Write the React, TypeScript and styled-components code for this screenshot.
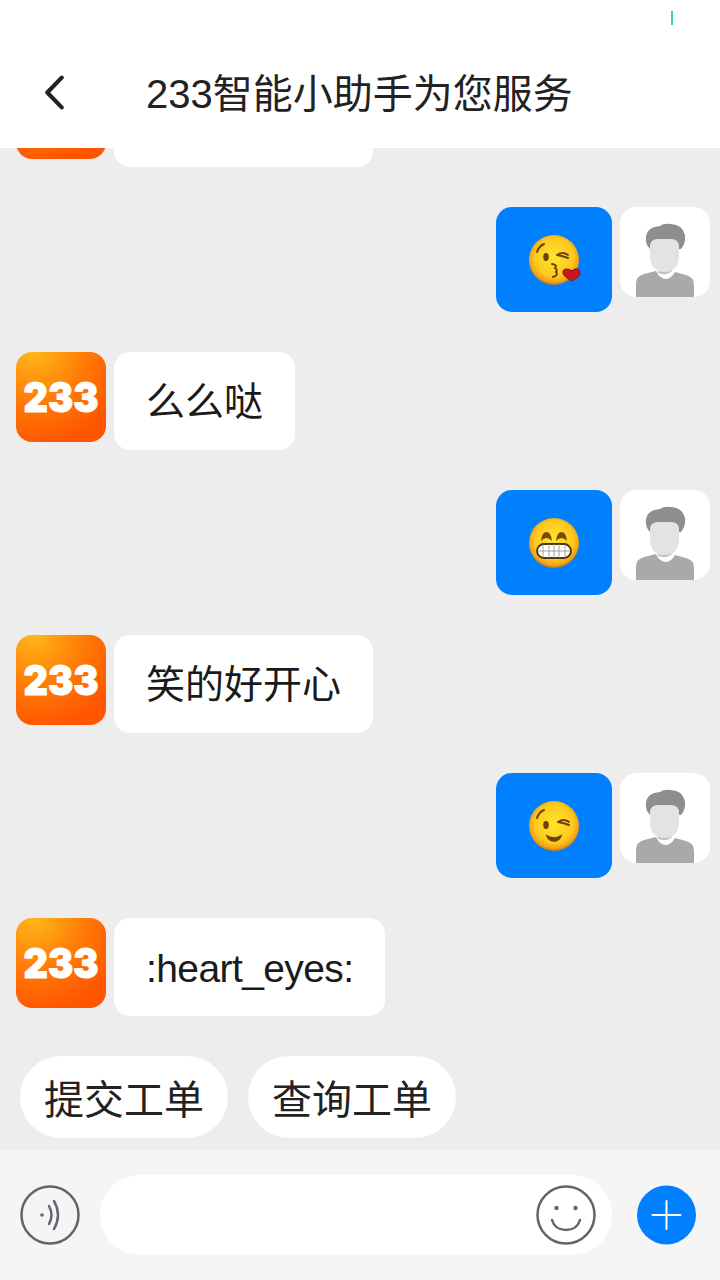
import * as React from 'react'
import styled, { createGlobalStyle } from 'styled-components'

const FONT = `'Liberation Sans', 'Noto Sans CJK SC', sans-serif`
const BLUE = '#0080ff'
const ICON_GREY = '#62646f'

type Face = 'kiss' | 'grin' | 'wink'

type Message =
  | { from: 'user'; face: Face }
  | { from: 'bot'; text: string; latin?: boolean; scrolledOut?: boolean }

const messages: Message[] = [
  // scrolled under the header, only its bottom edge shows
  { from: 'bot', text: '', scrolledOut: true },
  { from: 'user', face: 'kiss' },
  { from: 'bot', text: '么么哒' },
  { from: 'user', face: 'grin' },
  { from: 'bot', text: '笑的好开心' },
  { from: 'user', face: 'wink' },
  { from: 'bot', text: ':heart_eyes:', latin: true }
]

const quickActions = ['提交工单', '查询工单']

const BotLogo = ({ plain }: { plain?: boolean }) => (
  <LogoSvg viewBox="0 0 90 90">
    <defs>
      <radialGradient id="logoFill" cx="0.2" cy="0" r="1.05">
        <stop offset="0" stopColor="#ffb719" />
        <stop offset="0.55" stopColor="#ff7a06" />
        <stop offset="1" stopColor="#ff5500" />
      </radialGradient>
    </defs>
    <rect width="90" height="90" rx="16" fill="url(#logoFill)" />
    {!plain && (
      <LogoText
        x="45"
        y="60"
        textAnchor="middle"
        textLength="75"
        lengthAdjust="spacingAndGlyphs"
      >
        233
      </LogoText>
    )}
  </LogoSvg>
)

const UserAvatar = () => (
  <AvatarSvg viewBox="0 0 90 90">
    <rect width="90" height="90" rx="16" fill="#fff" />
    <path d="M16 90V77q0-8 8-10l12-3q4 8 10 8 5 0 9-7l11 3q8 2 8 10v12z" fill="#a9a9a9" />
    <path d="M38 58h14v6q-5 5-14 2z" fill="#c2c2c2" />
    <path d="M30 42Q25 37 26 30 27 20 40 19 44 16 50 17 62 17 65 28 66 36 61 42z" fill="#8e8e8e" />
    <path d="M30 40q0-8 8-8h13q8 0 8 8v8q0 17-14.500 17T30 48z" fill="#e3e3e3" />
  </AvatarSvg>
)

const FaceEmoji = ({ face }: { face: Face }) => (
  <EmojiSvg viewBox="0 0 52 52">
    <defs>
      <radialGradient id={`skin-${face}`} cx="0.5" cy="0.45" r="0.55">
        <stop offset="0" stopColor="#ffe52e" />
        <stop offset="0.7" stopColor="#fdc91e" />
        <stop offset="0.9" stopColor="#f3a114" />
        <stop offset="1" stopColor="#b9791a" />
      </radialGradient>
    </defs>
    <circle cx="26" cy="26" r="25" fill={`url(#skin-${face})`} />
    {face === 'kiss' && (
      <g fill="none" stroke="#6d4206" strokeLinecap="round">
        <path d="M9 18q2-6 7-8" strokeWidth="2" />
        <ellipse cx="18" cy="23" rx="2.800" ry="4" fill="#6d4206" stroke="none" />
        <path d="M29 21q6-4 11 0M29 21q6 1 11 3" strokeWidth="2" />
        <path d="M24 30q6 1 3 4 3 2 1 4 3 3-3 5" strokeWidth="2" />
        <path
          d="M44 37c3-4 9-2 8 2 0 4-5 6-8 8-3-2-8-4-9-8-1-5 6-5 9-2z"
          fill="#c8161d"
          stroke="#8c1015"
          strokeWidth="1"
        />
      </g>
    )}
    {face === 'grin' && (
      <g>
        <path d="M13 24q1-9 5.500-9t5.500 9q-5.500-6-11 0z" fill="#7a4a08" />
        <path d="M28 24q1-9 5.500-9t5.500 9q-5.500-6-11 0z" fill="#7a4a08" />
        <rect x="9" y="27" width="34" height="14" rx="7" fill="#fff" stroke="#4e3208" strokeWidth="1.800" />
        <path
          d="M9.500 34h33M15 27.500v13M21 27v14M26 27v14M31 27v14M37 27.500v13"
          stroke="#9a9a9a"
          strokeWidth="0.900"
          fill="none"
        />
      </g>
    )}
    {face === 'wink' && (
      <g fill="none" stroke="#6d4206" strokeLinecap="round">
        <path d="M9 18q2-6 7-8" strokeWidth="2" />
        <ellipse cx="18" cy="25" rx="2.800" ry="4" fill="#6d4206" stroke="none" />
        <path d="M30 22q6-4 11 0M30 22q6 1 11 3" strokeWidth="2" />
        <path d="M19 36q7 4 14 0-2 5-7 5t-7-5z" fill="#6d4206" strokeWidth="1.500" />
      </g>
    )}
  </EmojiSvg>
)

const App = () => (
  <Screen>
    <GlobalStyle />
    <Header>
      <StatusBar>
        <StatusTick />
      </StatusBar>
      <TitleBar>
        <BackButton viewBox="0 0 20 34">
          <path d="M17 2.500 3 17l14 14.500" />
        </BackButton>
        <Title>233智能小助手为您服务</Title>
      </TitleBar>
    </Header>
    <Chat>
      {messages.map((message, i) =>
        message.from === 'user' ? (
          <UserRow key={i}>
            <UserBubble>
              <FaceEmoji face={message.face} />
            </UserBubble>
            <UserAvatar />
          </UserRow>
        ) : (
          <BotRow key={i}>
            <BotLogo plain={message.scrolledOut} />
            <BotBubble $latin={message.latin} $scrolledOut={message.scrolledOut}>
              {message.text}
            </BotBubble>
          </BotRow>
        )
      )}
      <QuickRow>
        {quickActions.map(label => (
          <QuickButton key={label}>{label}</QuickButton>
        ))}
      </QuickRow>
    </Chat>
    <InputBar>
      <RoundIcon viewBox="0 0 60 60">
        <circle cx="30" cy="30" r="28.500" />
        <circle cx="22" cy="30" r="1.800" fill={ICON_GREY} stroke="none" />
        <path d="M29 21q5 9 0 18M34 16q8 14 0 28" />
      </RoundIcon>
      <InputField>
        <RoundIcon viewBox="0 0 60 60">
          <circle cx="30" cy="30" r="28.500" />
          <circle cx="20.500" cy="23" r="2.200" fill={ICON_GREY} stroke="none" />
          <circle cx="39.500" cy="23" r="2.200" fill={ICON_GREY} stroke="none" />
          <path d="M16 35q3 10 14 10t14-10" />
        </RoundIcon>
      </InputField>
      <PlusIcon viewBox="0 0 60 60">
        <circle cx="30" cy="30" r="30" fill={BLUE} />
        <path d="M30 15v30M15 30h30" stroke="#fff" strokeWidth="2" />
      </PlusIcon>
    </InputBar>
  </Screen>
)

const GlobalStyle = createGlobalStyle`
  html, body {
    margin: 0;
    padding: 0;
    background: #ededed;
  }
`

const Screen = styled.div`
  width: 720px;
  height: 1280px;
  display: flex;
  flex-direction: column;
  overflow: hidden;
  font-family: ${FONT};
  color: #1a1a1a;
`

const Header = styled.header`
  flex: 0 0 148px;
  display: flex;
  flex-direction: column;
  background: #fff;
`

const StatusBar = styled.div`
  flex: 0 0 40px;
  display: flex;
  justify-content: flex-end;
  align-items: flex-start;
  padding: 11px 47px 0 0;
  box-sizing: border-box;
`

const StatusTick = styled.span`
  width: 2px;
  height: 14px;
  background: #3fd0b4;
`

const TitleBar = styled.div`
  flex: 1;
  display: flex;
  align-items: center;
  padding-left: 44px;
  gap: 81px;
`

const BackButton = styled.svg`
  width: 21px;
  height: 35px;
  margin-top: -3px;
  fill: none;
  stroke: #222;
  stroke-width: 4;
  stroke-linecap: round;
  stroke-linejoin: round;
`

const Title = styled.h1`
  margin: 0;
  font-size: 40px;
  font-weight: 400;
  line-height: 50px;
  color: #222;
`

const Chat = styled.main`
  flex: 1;
  min-height: 0;
  display: flex;
  flex-direction: column;
  justify-content: flex-end;
  gap: 40px;
  overflow: hidden;
  padding-bottom: 12px;
`

const UserRow = styled.div`
  flex: none;
  display: flex;
  justify-content: flex-end;
  align-items: flex-start;
  gap: 8px;
  padding-right: 10px;
`

const BotRow = styled.div`
  flex: none;
  display: flex;
  align-items: flex-start;
  gap: 8px;
  padding-left: 16px;
`

const UserBubble = styled.div`
  width: 116px;
  height: 105px;
  display: flex;
  align-items: center;
  justify-content: center;
  background: ${BLUE};
  border-radius: 16px;
`

const BotBubble = styled.div<{ $latin?: boolean; $scrolledOut?: boolean }>`
  height: 98px;
  min-width: ${p => (p.$scrolledOut ? '259px' : '0')};
  padding: ${p => (p.$latin ? '4px 32px 0' : '0 32px 6px')};
  box-sizing: border-box;
  display: flex;
  align-items: center;
  background: #fff;
  border-radius: 16px;
  font-size: 39px;
  font-weight: 400;
  letter-spacing: ${p => (p.$latin ? '-0.6px' : '0')};
`

const LogoSvg = styled.svg`
  flex: none;
  width: 90px;
  height: 90px;
  display: block;
`

const LogoText = styled.text`
  font-family: Inter, 'Liberation Sans', sans-serif;
  font-size: 41px;
  font-weight: 900;
  fill: #fff;
  stroke: #fff;
  stroke-width: 1px;
`

const AvatarSvg = styled.svg`
  flex: none;
  width: 90px;
  height: 90px;
  display: block;
`

const EmojiSvg = styled.svg`
  width: 52px;
  height: 52px;
  display: block;
  overflow: visible;
  filter: blur(0.4px);
`

const QuickRow = styled.div`
  flex: none;
  display: flex;
  gap: 20px;
  padding-left: 20px;
`

const QuickButton = styled.button`
  height: 82px;
  width: 208px;
  padding: 0;
  border: 0;
  border-radius: 41px;
  background: #fff;
  font-family: inherit;
  font-size: 40px;
  font-weight: 400;
  color: #222;
`

const InputBar = styled.footer`
  flex: 0 0 130px;
  display: flex;
  align-items: center;
  padding: 0 24px 0 20px;
  box-sizing: border-box;
  background: #f5f5f5;
`

const RoundIcon = styled.svg`
  flex: none;
  width: 60px;
  height: 60px;
  fill: none;
  stroke: ${ICON_GREY};
  stroke-width: 2.500;
  stroke-linecap: round;
`

const InputField = styled.div`
  width: 512px;
  height: 80px;
  margin: 0 25px 0 20px;
  padding-right: 16px;
  box-sizing: border-box;
  display: flex;
  align-items: center;
  justify-content: flex-end;
  background: #fff;
  border-radius: 40px;
`

const PlusIcon = styled.svg`
  flex: none;
  width: 59px;
  height: 60px;
`

export default App
